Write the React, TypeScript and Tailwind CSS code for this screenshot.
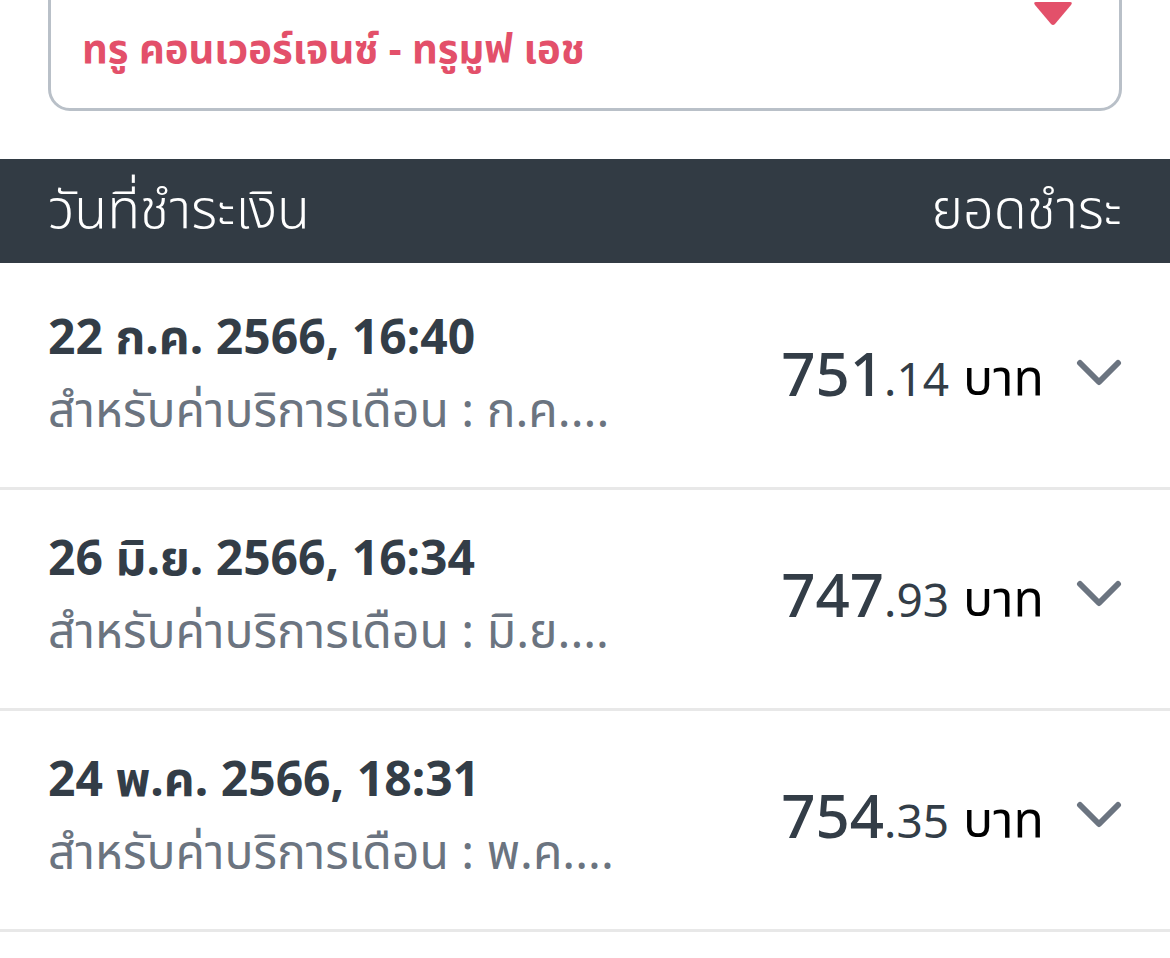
import React from "react";

const rows = [
  { date: "22 ก.ค. 2566, 16:40", sub: "สำหรับค่าบริการเดือน : ก.ค....", main: "751", dec: ".14" },
  { date: "26 มิ.ย. 2566, 16:34", sub: "สำหรับค่าบริการเดือน : มิ.ย....", main: "747", dec: ".93" },
  { date: "24 พ.ค. 2566, 18:31", sub: "สำหรับค่าบริการเดือน : พ.ค....", main: "754", dec: ".35" },
];

function Chevron() {
  return (
    <svg width="46" height="28" viewBox="0 0 46 28" fill="none">
      <path d="M4 4 L23 23 L42 4" stroke="#6b7480" strokeWidth="6" strokeLinecap="round" strokeLinejoin="round" />
    </svg>
  );
}

export default function App() {
  return (
    <div className="w-[1170px] h-[958px] overflow-hidden bg-white" style={{ fontFamily: '"Noto Sans", "Noto Sans Thai", sans-serif' }}>
      <div className="h-[159px] px-[48px] flex flex-col">
        <div className="relative -mt-[40px] h-[151px] rounded-[22px] border-[3px] border-[#b9c0c8] px-[31px] flex items-end pb-[40px]">
          <span className="text-[40px] font-bold text-[#e3506a] leading-none">ทรู คอนเวอร์เจนซ์ - ทรูมูฟ เอช</span>
          <svg className="absolute right-[45px] top-[38px]" width="42" height="26" viewBox="0 0 42 26">
            <path d="M4 1 H38 Q41 1 39 4 L23 23 Q21 25 19 23 L3 4 Q1 1 4 1 Z" fill="#e3506a" />
          </svg>
        </div>
      </div>
      <div className="h-[104px] bg-[#323b44] px-[48px] pb-[8px] flex items-center justify-between text-white text-[54px] font-light">
        <span>วันที่ชำระเงิน</span>
        <span>ยอดชำระ</span>
      </div>
      <div className="pt-[6px]">
        {rows.map((r, i) => (
          <div key={i} className="h-[221px] border-b-[3px] border-[#e8e8e8] pl-[48px] pr-[48px] flex items-center justify-between">
            <div className="flex flex-col gap-[13px] mb-[12px]">
              <span className="text-[48px] font-bold text-[#333d47] leading-[60px]">{r.date}</span>
              <span className="text-[48px] text-[#6b7480] leading-[60px]">{r.sub}</span>
            </div>
            <div className="flex items-center mb-[10px]">
              <span className="text-[60px] font-medium text-[#333d47] leading-none">{r.main}</span>
              <span className="text-[46px] text-[#333d47] leading-none mt-[10px]">{r.dec}</span>
              <span className="text-[50px] text-black leading-none ml-[14px] mt-[6px]">บาท</span>
              <div className="ml-[32px]"><Chevron /></div>
            </div>
          </div>
        ))}
      </div>
    </div>
  );
}
